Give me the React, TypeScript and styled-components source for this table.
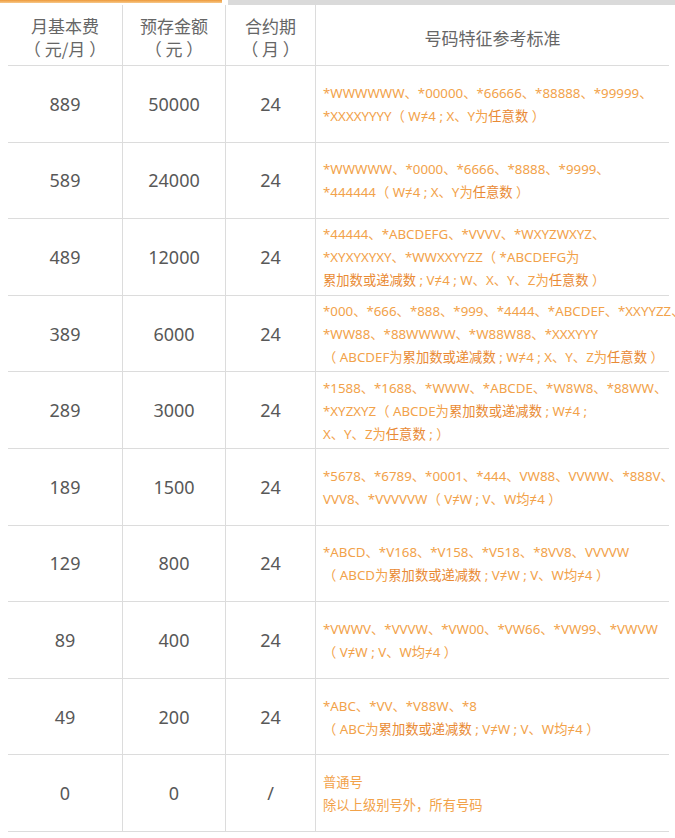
import React from 'react';
import styled, { createGlobalStyle } from 'styled-components';

const GlobalStyle = createGlobalStyle`
  html, body {
    margin: 0;
    padding: 0;
    background: #fff;
  }
  body {
    font-family: "Noto Sans", "Noto Sans CJK SC", sans-serif;
  }
`;

const Page = styled.div`
  width: 675px;
  height: 838px;
  overflow: hidden;
  background: #fff;
`;

const TabBar = styled.div`
  display: flex;
  height: 5px;
  gap: 6px;
`;

const TabActive = styled.div`
  width: 222px;
  height: 3px;
  background: linear-gradient(#ee9a3a, #f7c88a);
`;

const TabRest = styled.div`
  flex: 1;
  height: 5px;
  background: #dadada;
`;

const Table = styled.div`
  margin: 0 6px 0 8px;
  display: grid;
  grid-template-columns: 115px 103px 90px minmax(0, 1fr);
`;

const HeadCell = styled.div<{ $last?: boolean }>`
  box-sizing: border-box;
  height: 61px;
  padding-top: 4px;
  display: flex;
  flex-direction: column;
  align-items: center;
  justify-content: center;
  border-bottom: 1px solid #dcdcdc;
  border-right: ${(p) => (p.$last ? 'none' : '1px solid #dcdcdc')};
  color: #666;
  font-size: 17px;
  line-height: 23px;
  font-family: "Noto Sans CJK SC", sans-serif;
`;

const NumCell = styled.div`
  box-sizing: border-box;
  height: 76.6px;
  display: flex;
  align-items: center;
  justify-content: center;
  border-bottom: 1px solid #dcdcdc;
  border-right: 1px solid #dcdcdc;
  color: #585858;
  font-size: 18px;
`;

const RuleCell = styled.div`
  box-sizing: border-box;
  height: 76.6px;
  display: flex;
  align-items: center;
  padding-left: 7px;
  border-bottom: 1px solid #dcdcdc;
  color: #f2a24a;
  font-size: 13.3px;
  line-height: 23px;
  white-space: nowrap;
  overflow: visible;
`;

const RuleText = styled.div`
  position: relative;
  top: 1px;
`;

const Dark = styled.span`
  color: #e98a34;
`;

type Row = {
  fee: string;
  deposit: string;
  term: string;
  lines: React.ReactNode[];
};

const rows: Row[] = [
  {
    fee: '889',
    deposit: '50000',
    term: '24',
    lines: [
      '*WWWWWW、*00000、*66666、*88888、*99999、',
      <>*XXXXYYYY（ W≠4 ; X、Y为<Dark>任意数</Dark> ）</>,
    ],
  },
  {
    fee: '589',
    deposit: '24000',
    term: '24',
    lines: [
      '*WWWWW、*0000、*6666、*8888、*9999、',
      <>*444444（ W≠4 ; X、Y为<Dark>任意数</Dark> ）</>,
    ],
  },
  {
    fee: '489',
    deposit: '12000',
    term: '24',
    lines: [
      '*44444、*ABCDEFG、*VVVV、*WXYZWXYZ、',
      '*XYXYXYXY、*WWXXYYZZ（ *ABCDEFG为',
      <><Dark>累加数或递减数</Dark> ; V≠4 ; W、X、Y、Z为<Dark>任意数</Dark> ）</>,
    ],
  },
  {
    fee: '389',
    deposit: '6000',
    term: '24',
    lines: [
      '*000、*666、*888、*999、*4444、*ABCDEF、*XXYYZZ、',
      '*WW88、*88WWWW、*W88W88、*XXXYYY',
      <>（ ABCDEF为<Dark>累加数或递减数</Dark> ; W≠4 ; X、Y、Z为<Dark>任意数</Dark> ）</>,
    ],
  },
  {
    fee: '289',
    deposit: '3000',
    term: '24',
    lines: [
      '*1588、*1688、*WWW、*ABCDE、*W8W8、*88WW、',
      <>*XYZXYZ（ ABCDE为<Dark>累加数或递减数</Dark> ; W≠4 ;</>,
      <>X、Y、Z为<Dark>任意数</Dark> ; ）</>,
    ],
  },
  {
    fee: '189',
    deposit: '1500',
    term: '24',
    lines: [
      '*5678、*6789、*0001、*444、VW88、VVWW、*888V、',
      'VVV8、*VVVVVW（ V≠W ; V、W均≠4 ）',
    ],
  },
  {
    fee: '129',
    deposit: '800',
    term: '24',
    lines: [
      '*ABCD、*V168、*V158、*V518、*8VV8、VVVVW',
      <>（ ABCD为<Dark>累加数或递减数</Dark> ; V≠W ; V、W均≠4 ）</>,
    ],
  },
  {
    fee: '89',
    deposit: '400',
    term: '24',
    lines: [
      '*VWWV、*VVVW、*VW00、*VW66、*VW99、*VWVW',
      '（ V≠W ; V、W均≠4 ）',
    ],
  },
  {
    fee: '49',
    deposit: '200',
    term: '24',
    lines: [
      '*ABC、*VV、*V88W、*8',
      <>（ ABC为<Dark>累加数或递减数</Dark> ; V≠W ; V、W均≠4 ）</>,
    ],
  },
  {
    fee: '0',
    deposit: '0',
    term: '/',
    lines: ['普通号', '除以上级别号外，所有号码'],
  },
];

const App = () => {
  return (
    <Page>
      <GlobalStyle />
      <TabBar>
        <TabActive />
        <TabRest />
      </TabBar>
      <Table>
        <HeadCell>
          <span>月基本费</span>
          <span>（ 元/月 ）</span>
        </HeadCell>
        <HeadCell>
          <span>预存金额</span>
          <span>（ 元 ）</span>
        </HeadCell>
        <HeadCell>
          <span>合约期</span>
          <span>（ 月 ）</span>
        </HeadCell>
        <HeadCell $last>号码特征参考标准</HeadCell>
        {rows.map((r) => (
          <React.Fragment key={r.fee}>
            <NumCell>{r.fee}</NumCell>
            <NumCell>{r.deposit}</NumCell>
            <NumCell>{r.term}</NumCell>
            <RuleCell>
              <RuleText>
                {r.lines.map((l, i) => (
                  <div key={i}>{l}</div>
                ))}
              </RuleText>
            </RuleCell>
          </React.Fragment>
        ))}
      </Table>
    </Page>
  );
};

export default App;
